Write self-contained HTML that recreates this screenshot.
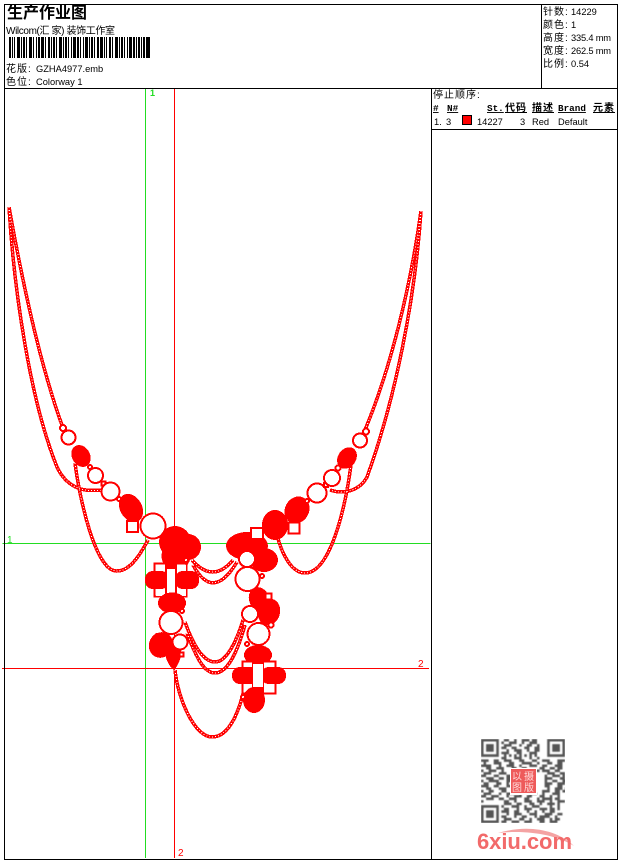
<!DOCTYPE html>
<html><head><meta charset="utf-8"><style>
html,body{margin:0;padding:0;background:#fff;width:620px;height:860px;overflow:hidden}
svg{position:absolute;left:0;top:0}
text{font-family:"Liberation Sans","WenQuanYi Zen Hei","Noto Sans CJK SC",sans-serif;font-size:9.300px;fill:#000}
.z{font-size:10px;letter-spacing:1px}
.m{font-family:"Liberation Mono",monospace;font-weight:bold;text-decoration:underline;font-size:9.300px}
.mz{font-family:"WenQuanYi Zen Hei","Noto Sans CJK SC",sans-serif;font-weight:bold;text-decoration:underline;font-size:10px;letter-spacing:1px}
.c{fill:none;stroke:#f00;stroke-width:3.500}
.d{fill:none;stroke:#fff;stroke-width:1;stroke-dasharray:1 2}
.o{fill:#fff;stroke:#f00;stroke-width:2}
.r{fill:#f00}
.w{fill:#fff}
</style></head><body>
<svg width="620" height="860" viewBox="0 0 620 860" shape-rendering="crispEdges">
<!-- guides -->
<path d="M145 89V858M2 543.500H430" stroke="#22dd22" fill="none" transform="translate(.5 0)"/>
<path d="M174.500 89V858M2 668.500H429" stroke="#f00" fill="none"/>
<!-- chains -->
<g id="chains">
<path class="c" d="M9 207C14 290 30 400 57 467C62 478 70 485 78 488C88 492 98 490 110 490"/>
<path class="c" d="M9 207C22 280 40 365 63 428"/>
<path class="c" d="M75 463C79 495 95 572 117 571C130 571 140 555 148 540"/>
<path class="c" d="M421 211C415 300 395 400 367 477C360 490 345 495 330 490"/>
<path class="c" d="M421 211C410 290 390 370 365 430"/>
<path class="c" d="M351 465C345 510 330 573 305 573C292 573 282 555 277 535"/>
<path class="c" d="M192 560Q213 584 233 560"/>
<path class="c" d="M193 565Q213 602 237 562"/>
<path class="c" d="M185 622C195 650 205 662 215 662C227 662 237 640 243 620"/>
<path class="c" d="M187 633C197 660 205 673 215 673C228 673 238 650 245 625"/>
<path class="c" d="M175 670C178 700 195 737 212 737C228 737 238 715 244 690"/>
<path class="d" d="M9 207C14 290 30 400 57 467C62 478 70 485 78 488C88 492 98 490 110 490"/>
<path class="d" d="M9 207C22 280 40 365 63 428"/>
<path class="d" d="M75 463C79 495 95 572 117 571C130 571 140 555 148 540"/>
<path class="d" d="M421 211C415 300 395 400 367 477C360 490 345 495 330 490"/>
<path class="d" d="M421 211C410 290 390 370 365 430"/>
<path class="d" d="M351 465C345 510 330 573 305 573C292 573 282 555 277 535"/>
<path class="d" d="M192 560Q213 584 233 560"/>
<path class="d" d="M193 565Q213 602 237 562"/>
<path class="d" d="M185 622C195 650 205 662 215 662C227 662 237 640 243 620"/>
<path class="d" d="M187 633C197 660 205 673 215 673C228 673 238 650 245 625"/>
<path class="d" d="M175 670C178 700 195 737 212 737C228 737 238 715 244 690"/>
</g>
<!-- left arm -->
<circle class="o" cx="63" cy="428" r="3"/>
<circle class="o" cx="68.500" cy="437.500" r="7"/>
<ellipse class="r" cx="81" cy="456" rx="9" ry="11.500" transform="rotate(-30 81 456)"/>
<circle class="o" cx="90" cy="467" r="2"/>
<circle class="o" cx="95.500" cy="475.500" r="7.500"/>
<rect class="o" x="101.500" y="481.500" width="4" height="4"/>
<circle class="o" cx="110.500" cy="491.500" r="9"/>
<circle class="o" cx="119" cy="499" r="2"/>
<ellipse class="r" cx="131" cy="508" rx="11" ry="15" transform="rotate(-30 131 508)"/>
<rect class="o" x="127" y="521" width="11" height="11"/>
<circle class="o" cx="153" cy="526" r="12.500"/>
<!-- left pendant -->
<circle class="r" cx="175" cy="542" r="16"/>
<circle class="r" cx="188" cy="547" r="13"/>
<circle class="r" cx="176" cy="556" r="14.500"/>
<circle class="o" cx="186" cy="560" r="2"/>
<rect class="o" x="154.500" y="563.500" width="32" height="33"/>
<rect class="r" x="165" y="563" width="12" height="34"/>
<rect class="w" x="156" y="565" width="9" height="8"/>
<rect class="w" x="178" y="565" width="8" height="8"/>
<rect class="w" x="156" y="587" width="9" height="9"/>
<rect class="w" x="178" y="587" width="8" height="9"/>
<rect class="r" x="145" y="571" width="24" height="18" rx="8"/>
<rect class="r" x="175" y="571" width="24" height="18" rx="8"/>
<rect class="w" x="167" y="569" width="8" height="24"/>
<ellipse class="r" cx="172" cy="603" rx="14" ry="10.500"/>
<circle class="o" cx="182" cy="611" r="2"/>
<circle class="o" cx="171" cy="622.500" r="11.500"/>
<circle class="o" cx="157" cy="636" r="2"/>
<ellipse class="r" cx="161" cy="645" rx="12" ry="13" transform="rotate(25 161 645)"/>
<path class="r" d="M165 648C170 644 178 644 181 650C182 657 178 666 174 670C170 668 164 658 165 648Z"/>
<circle class="o" cx="180" cy="642" r="7.500"/>
<rect class="o" x="179.500" y="652.500" width="4" height="4"/>
<!-- right pendant top -->
<ellipse class="r" cx="247" cy="546" rx="21" ry="14"/>
<ellipse class="r" cx="264" cy="560" rx="14" ry="12"/>
<circle class="o" cx="247" cy="559" r="8"/>
<circle class="o" cx="247.500" cy="579" r="12"/>
<circle class="o" cx="262" cy="576" r="2"/>
<ellipse class="r" cx="275" cy="525" rx="13" ry="15"/>
<ellipse class="r" cx="297" cy="510" rx="12" ry="14" transform="rotate(30 297 510)"/>
<rect class="o" x="251" y="528" width="12" height="11"/>
<rect class="w" x="289" y="523" width="10" height="10"/>
<rect class="o" x="288.500" y="522.500" width="11" height="11"/>
<circle class="o" cx="307" cy="501" r="2"/>
<circle class="o" cx="317" cy="493" r="9.500"/>
<rect class="o" x="324" y="483" width="4" height="4"/>
<circle class="o" cx="332" cy="478" r="8"/>
<circle class="o" cx="338" cy="468" r="2.500"/>
<ellipse class="r" cx="347" cy="458" rx="9" ry="11.500" transform="rotate(35 347 458)"/>
<circle class="o" cx="360" cy="440.500" r="7"/>
<circle class="o" cx="366" cy="431.500" r="3"/>
<!-- right pendant lower -->
<ellipse class="r" cx="259" cy="599" rx="10" ry="12" transform="rotate(-20 259 599)"/>
<ellipse class="r" cx="269" cy="612" rx="11" ry="13.500" transform="rotate(15 269 612)"/>
<rect class="o" x="265.500" y="593.500" width="6" height="6"/>
<circle class="o" cx="250" cy="614" r="8"/>
<circle class="o" cx="271" cy="625" r="2.500"/>
<circle class="o" cx="258.500" cy="634" r="11"/>
<circle class="o" cx="247" cy="644" r="2"/>
<ellipse class="r" cx="258" cy="655" rx="14" ry="10"/>
<rect class="o" x="242.500" y="661.500" width="33" height="32"/>
<rect class="r" x="252" y="661" width="12" height="33"/>
<rect class="w" x="244" y="663" width="8" height="6"/>
<rect class="w" x="266" y="663" width="8" height="6"/>
<rect class="w" x="244" y="684" width="8" height="8"/>
<rect class="w" x="266" y="684" width="8" height="8"/>
<rect class="r" x="232" y="667" width="26" height="17" rx="8"/>
<rect class="r" x="261" y="667" width="25" height="17" rx="8"/>
<ellipse class="r" cx="254" cy="700" rx="11" ry="13"/>
<rect class="w" x="253" y="664" width="10" height="23"/>
<circle class="o" cx="243" cy="697" r="2"/>
<!-- frame -->
<path d="M4.500 4.500H617.500V859.500H4.500ZM4.500 88.500H617.500M541.500 4.500V88.500M431.500 88.500V859.500M431.500 129.500H617.500" fill="none" stroke="#000"/>
<!-- barcode -->
<line x1="9" y1="47.500" x2="150" y2="47.500" stroke="#000" stroke-width="21" stroke-dasharray="2 1 1 1 1 2 3 1 1 1 2 1 1 2 3 1 1 2 1 1 2 1 3 1 1 2 2 1 1 1 2 1 1 2 3 1 1 1 2 1 1 2 1 1 3 1 2 1 1 2 1 1 3 1 1 1 2 1 1 2 2 1 3 1 1 1 1 2 2 1 1 2 3 1 1 1 2 1 1 2 1 1 3 1 2 1 1 1 2 1 1 1 2 1 4 50"/>
<!-- labels -->
<g shape-rendering="auto">
<text x="7" y="18" style="font-size:16px;font-weight:bold">生产作业图</text>
<text x="6" y="34" style="font-size:10px" textLength="109">Wilcom(汇 家) 装饰工作室</text>
<text class="z" x="6" y="72">花版:</text><text x="36" y="72">GZHA4977.emb</text>
<text class="z" x="6" y="85">色位:</text><text x="36" y="85">Colorway 1</text>
<text class="z" x="543" y="15">针数:</text><text x="571" y="15">14229</text>
<text class="z" x="543" y="28">颜色:</text><text x="571" y="28">1</text>
<text class="z" x="543" y="41">高度:</text><text x="571" y="41" textLength="40">335.4 mm</text>
<text class="z" x="543" y="54">宽度:</text><text x="571" y="54" textLength="40">262.5 mm</text>
<text class="z" x="543" y="67">比例:</text><text x="571" y="67">0.54</text>
<text class="z" x="433" y="98">停止顺序:</text>
<text class="m" x="433" y="111">#</text>
<text class="m" x="447" y="111">N#</text>
<text class="m" x="487" y="111">St.</text>
<text class="mz" x="505" y="111">代码</text>
<text class="mz" x="532" y="111">描述</text>
<text class="m" x="558" y="111">Brand</text>
<text class="mz" x="593" y="111">元素</text>
<text x="434" y="125">1.</text>
<text x="446" y="125">3</text>
<text x="477" y="125">14227</text>
<text x="520" y="125">3</text>
<text x="532" y="125">Red</text>
<text x="558" y="125">Default</text>
<text x="150" y="96" style="fill:#22dd22;font-size:9px;font-weight:bold">1</text>
<text x="7" y="543" style="fill:#22dd22;font-size:10px">1</text>
<text x="418" y="667" style="fill:#f00;font-size:10px">2</text>
<text x="178" y="856" style="fill:#f00;font-size:10px">2</text>
</g>
<rect x="462.500" y="115.500" width="9" height="9" fill="#f00" stroke="#000"/>
<!-- QR -->
<svg x="481" y="739" width="84" height="84" viewBox="0 0 33 33" shape-rendering="auto">
<defs><filter id="b" x="-5%" y="-5%" width="110%" height="110%"><feGaussianBlur stdDeviation=".2"/></filter></defs>
<g filter="url(#b)">
<path fill="none" stroke="#555" d="M.5 .5h6v6h-6zM26.500 .5h6v6h-6zM.5 26.500h6v6h-6z"/>
<path fill="#555" d="M2 2h3v3H2zM28 2h3v3h-3zM2 28h3v3H2z"/>
<path fill="none" stroke="#555" stroke-width="1" d="M9 .5h2m2 0h1m2 0h3m1 0h2M8 1.500h1m2 0h3m2 0h1m2 0h3M9 2.500h3m3 0h1m2 0h2m2 0h1M8 3.500h2m2 0h2m3 0h2m2 0h2M10 4.500h1m2 0h3m2 0h1m2 0h2M8 5.500h3m3 0h2m3 0h3M9 6.500h1m1 0h1m1 0h1m1 0h1m1 0h1m1 0h1m1 0h1M8 7.500h2m3 0h3m3 0h1m2 0h1M0 8.500h3m2 0h2m2 0h3m3 0h2m3 0h2m2 0h3m3 0h3m2 0h1M1 9.500h1m3 0h3m3 0h2m3 0h4m2 0h1m3 0h2m2 0h2M0 10.500h4m3 0h1m2 0h3m2 0h1m3 0h3m2 0h2m3 0h3M2 11.500h2m2 0h3m3 0h2m2 0h2m5 0h2m2 0h2m1 0h2M0 12.500h1m2 0h3m2 0h1m3 0h1m8 0h2m1 0h3m2 0h2M1 13.500h3m3 0h3m2 0h1m13 0h3m2 0h2M0 14.500h2m3 0h2m3 0h2m13 0h1m2 0h3m1 0h1M2 15.500h3m2 0h2m1 0h2m13 0h3m3 0h2M0 16.500h1m2 0h4m3 0h2m13 0h1m2 0h2m2 0h2M1 17.500h2m3 0h2m2 0h1m14 0h3m2 0h3M0 18.500h3m2 0h2m3 0h2m13 0h2m3 0h2M2 19.500h2m3 0h3m2 0h1m13 0h1m2 0h3m1 0h1M0 20.500h1m2 0h2m3 0h2m2 0h2m10 0h3m2 0h2m1 0h2M1 21.500h3m3 0h1m2 0h3m2 0h1m3 0h3m2 0h1m3 0h3M0 22.500h2m2 0h3m3 0h1m2 0h3m2 0h2m3 0h2m2 0h1m2 0h1M2 23.500h3m2 0h2m2 0h3m3 0h2m3 0h1m1 0h4m1 0h2M0 24.500h1m8 0h2m2 0h1m3 0h3m2 0h3m2 0h1m2 0h3M9 25.500h3m2 0h2m3 0h2m2 0h1m2 0h3m1 0h1M8 26.500h1m3 0h3m2 0h1m2 0h3m4 0h1m2 0h1M9 27.500h2m3 0h1m2 0h3m3 0h3m1 0h2m1 0h1M8 28.500h3m2 0h2m3 0h1m2 0h1m2 0h1m2 0h2M10 29.500h1m2 0h3m3 0h3m3 0h3m2 0h2M8 30.500h2m3 0h1m2 0h2m3 0h1m1 0h4m2 0h1M9 31.500h3m3 0h2m2 0h1m2 0h3m2 0h1m1 0h2M8 32.500h2m2 0h3m2 0h3m3 0h2m2 0h3"/>
</g></svg>
<g shape-rendering="auto">
<rect x="510" y="768" width="27" height="27" fill="#fff"/>
<rect x="511" y="769" width="25" height="24" fill="#ee5a5a"/>
<text x="512" y="780" style="font-size:10px;fill:#ffd8d8">以</text>
<text x="524" y="780" style="font-size:10px;fill:#ffd8d8">摄</text>
<text x="512" y="791" style="font-size:10px;fill:#ffd8d8">图</text>
<text x="524" y="791" style="font-size:10px;fill:#ffd8d8">版</text>
<path d="M498 833C525 825 555 828 574 846C555 834 525 830 498 833Z" fill="#f4a3a3"/>
<text x="477" y="849" textLength="95" style="font-size:22px;font-weight:bold;fill:#f26a6a;font-family:'Liberation Sans',sans-serif">6xiu.com</text>
</g>
</svg>
</body></html>
